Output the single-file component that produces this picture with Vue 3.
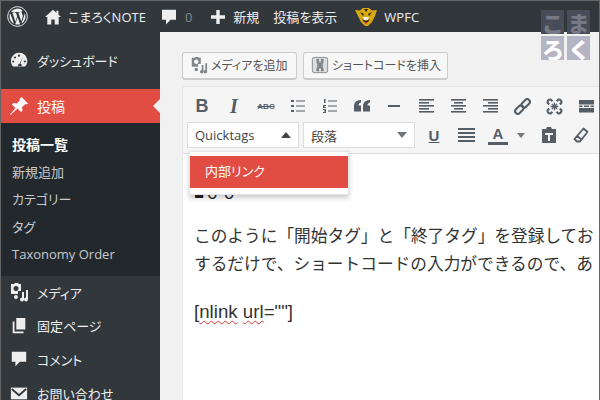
<script setup>
const subItems = [
  { label: '投稿一覧', current: true },
  { label: '新規追加' },
  { label: 'カテゴリー' },
  { label: 'タグ' },
  { label: 'Taxonomy Order' },
]
const alignRows = { left: [15, 10, 15, 10, 15], center: [15, 9, 15, 9, 15], right: [15, 10, 15, 10, 15] }
</script>

<template>
  <div class="screen">
    <header class="adminbar">
      <svg class="wp" viewBox="0 0 20 20" width="21" height="21">
        <circle cx="10" cy="10" r="9.4" fill="none" stroke="#eee" stroke-width=".9" />
        <path fill="#eee" d="M2.4 10c0 3 1.800 5.600 4.300 6.900L3.100 6.900A7.600 7.600 0 0 0 2.400 10zm12.700-.4c0-.9-.3-1.600-.6-2.100-.4-.6-.7-1.100-.7-1.700 0-.7.5-1.300 1.200-1.300h.1A7.600 7.600 0 0 0 3.600 5.900h.5c.8 0 2-.1 2-.1.4 0 .5.600 0 .6 0 0-.4.100-.9.100l2.800 8.400 1.700-5.100-1.200-3.300c-.4 0-.8-.1-.8-.1-.4 0-.4-.6 0-.6 0 0 1.300.1 2 .1.800 0 2-.1 2-.1.400 0 .5.600 0 .6 0 0-.4.100-.9.100l2.800 8.300.8-2.600c.3-1 .6-1.800.6-2.600zM10.100 10.700l-2.300 6.700a7.700 7.700 0 0 0 4.700-.1l-.1-.1zm6.500-4.300.1.800c0 .8-.1 1.600-.6 2.800l-2.300 6.700a7.600 7.600 0 0 0 2.800-10.300z" />
      </svg>
      <svg class="home" viewBox="0 0 16 16" width="16" height="16">
        <path fill="#eee" d="M8 .8 0 8h2.300v7.500h4V10.500h3.400v5h4V8H16l-2.600-2.400V1.700h-2v2.100z" />
      </svg>
      <span class="bar-site">こまろくNOTE</span>
      <svg class="bubble" viewBox="0 0 16 16" width="16" height="16">
        <path fill="#eee" d="M1 .8h14v10H9.500L5 15.500v-4.700H1z" />
      </svg>
      <span class="bar-count">0</span>
      <svg class="plus" viewBox="0 0 14 14" width="14" height="14">
        <path fill="#eee" d="M5.300 0h3.400v5.300H14v3.400H8.700V14H5.300V8.700H0V5.300h5.300z" />
      </svg>
      <span class="bar-new">新規</span>
      <span class="bar-view">投稿を表示</span>
      <svg class="tiger" viewBox="0 0 22 18" width="22" height="18">
        <path fill="#d8a913" d="M0 2l5 .5L8 0h6l3 2.500 5-.5-2 6-3 6-4 4h-3l-4-4-3-6z" />
        <path fill="#2b2410" d="M5 4l4 2-1 2zM17 4l-4 2 1 2zM9 1h4l-2 3zM7 11l4 2 4-2-2 3h-4z" />
        <path fill="#f4efe0" d="M8 9h6l-1 3H9z" />
        <path fill="#c42a1c" d="M9.500 14h3l-1.500 2.500z" />
      </svg>
      <span class="bar-wpfc">WPFC</span>
    </header>

    <div class="body">
      <aside class="sidebar">
        <a class="menu-item first">
          <svg viewBox="0 0 20 20" width="18" height="18">
            <path fill="#eee" fill-rule="evenodd" d="M10 2a9 9 0 0 0-9 9c0 2.400.9 4.700 2.400 6.300h13.200A9 9 0 0 0 10 2zM10 4a1.200 1.200 0 1 1 0 2.400A1.200 1.200 0 0 1 10 4zM5.500 6a1.200 1.200 0 1 1 0 2.400 1.200 1.200 0 0 1 0-2.400zM3.500 10.500a1.200 1.200 0 1 1 0 2.400 1.200 1.200 0 0 1 0-2.400zM16.500 10.500a1.200 1.200 0 1 1 0 2.400 1.200 1.200 0 0 1 0-2.400zM14.500 6.500l-3 7.500a2 2 0 1 1-2.500 1.500c.2-.6.800-1.200 1.500-1.300z" />
          </svg>
          <span>ダッシュボード</span>
        </a>
        <a class="menu-item active">
          <svg viewBox="0 0 20 20" width="20" height="20">
            <path fill="#fff" d="M12.500 1l6.500 6.500-1.500 1-1-.5-3.500 3 .5 3.500-1.500 1.500-3.500-3.500L1.500 19 1 18.500l5.500-6.500L3 8.500 4.500 7l3.500.5 3-3.500-.5-1z" />
          </svg>
          <span>投稿</span>
          <i class="caret"></i>
        </a>
        <ul class="submenu">
          <li v-for="item in subItems" :key="item.label" :class="{ current: item.current }">{{ item.label }}</li>
        </ul>
        <a class="menu-item">
          <svg viewBox="0 0 20 20" width="20" height="20">
            <path fill="#eee" fill-rule="evenodd" d="M2 2h3l1-1h3l1 1h2v7H9v3H2zM7 4a2.500 2.500 0 1 0 0 5 2.500 2.500 0 0 0 0-5z" />
            <path fill="#eee" d="M17 8h2v9.500a2 2 0 1 1-2-2zM13 10h2v7.500a2 2 0 1 1-2-2zM7 13a2 2 0 1 1-.1 4 2 2 0 0 1 .1-4z" />
          </svg>
          <span>メディア</span>
        </a>
        <a class="menu-item">
          <svg viewBox="0 0 20 20" width="18" height="18">
            <path fill="#eee" d="M7 1h10v13H7zM3 5h2v11h10v2H3z" />
          </svg>
          <span>固定ページ</span>
        </a>
        <a class="menu-item">
          <svg viewBox="0 0 20 20" width="18" height="18">
            <path fill="#eee" d="M2 2h16v11h-7l-5 5v-5H2z" />
          </svg>
          <span>コメント</span>
        </a>
        <a class="menu-item">
          <svg viewBox="0 0 20 20" width="18" height="18">
            <path fill="#eee" d="M1 4h18v13H1z" />
            <path fill="none" stroke="#32373c" stroke-width="2" d="M2 5.500l8 7 8-7" />
          </svg>
          <span>お問い合わせ</span>
        </a>
      </aside>

      <main class="content">
        <div class="media-buttons">
          <button class="wp-btn media">
            <svg viewBox="0 0 20 20" width="18" height="18">
              <path fill="#82878c" fill-rule="evenodd" d="M2 2h3l1-1h3l1 1h2v7H9v3H2zM7 4a2.500 2.500 0 1 0 0 5 2.500 2.500 0 0 0 0-5z" />
              <path fill="#82878c" d="M17 8h2v9.500a2 2 0 1 1-2-2zM13 10h2v7.500a2 2 0 1 1-2-2zM7 13a2 2 0 1 1-.1 4 2 2 0 0 1 .1-4z" />
            </svg>
            メディアを追加
          </button>
          <button class="wp-btn code">
            <svg viewBox="0 0 20 20" width="18" height="18">
              <rect x="1.500" y="1.500" width="17" height="17" rx="2" fill="#ddd" stroke="#82878c" />
              <path fill="#82878c" d="M6 3h3v4h2V3h3v4l-1 2v3l1 2v3h-3v-3H9v3H6v-3l1-2V9L6 7z" />
            </svg>
            ショートコードを挿入
          </button>
        </div>

        <section class="editor">
          <div class="toolbar">
            <div class="tool-row">
              <span class="slot ti b">B</span>
              <span class="slot ti i">I</span>
              <span class="slot ti abc">ABC</span>
              <span class="slot"><svg viewBox="0 0 14 14" width="14" height="14"><path fill="#555d66" d="M0 1h3v2H0zM0 6h3v2H0zM0 11h3v2H0zM5 1.500h9v1H5zM5 6.500h9v1H5zM5 11.500h9v1H5z" /></svg></span>
              <span class="slot"><svg viewBox="0 0 14 14" width="14" height="14"><path fill="#555d66" d="M1 0h1.500v4H1zM0 6h3v1H1.500v1H3v1H0v-1zM0 10h3v4H0v-1h2v-.5H1v-1h1V11H0zM5 1.500h9v1H5zM5 6.500h9v1H5zM5 11.500h9v1H5z" /></svg></span>
              <span class="slot"><svg viewBox="0 0 16 12" width="16" height="12"><path fill="#555d66" d="M7 0v2.500C5 3 4.500 4 4.500 5.500H7V11.500H0V6C0 2.500 2.500.3 7 0zM16 0v2.500C14 3 13.500 4 13.500 5.500H16v6H9V6c0-3.500 2.500-5.700 7-6z" /></svg></span>
              <span class="slot"><svg viewBox="0 0 14 14" width="14" height="14"><path fill="#555d66" d="M1 6h12v2H1z" /></svg></span>
              <span v-for="(w, k) in alignRows" :key="k" class="slot">
                <svg viewBox="0 0 15 14" width="15" height="14">
                  <rect v-for="(v, n) in w" :key="n"
                    :x="k === 'left' ? 0 : k === 'right' ? 15 - v : 7.500 - v / 2" :y="n * 3" :width="v" height="1.600" fill="#555d66" />
                </svg>
              </span>
              <span class="slot"><svg viewBox="0 0 16 16" width="17" height="17"><g fill="none" stroke="#555d66" stroke-width="2"><rect x="-4.500" y="-2.500" width="9" height="5" rx="2.500" transform="translate(5 11) rotate(-45)" /><rect x="-4.500" y="-2.500" width="9" height="5" rx="2.500" transform="translate(11 5) rotate(-45)" /></g></svg></span>
              <span class="slot"><svg viewBox="0 0 16 16" width="17" height="17"><g fill="none" stroke="#555d66" stroke-width="2"><path d="M6 3 4.500 1.500a2.500 2.500 0 0 0-3 3L3 6M13 10l1.500 1.500a2.500 2.500 0 0 1-3 3L10 13M10 3l1.500-1.500a2.500 2.500 0 0 1 3 3L13 6M6 13l-1.500 1.500a2.500 2.500 0 0 1-3-3L3 10" /><path stroke-width="1.200" d="M5.500 5.500l5 5M10.500 5.500l-5 5M8 4.500v7M4.500 8h7" /></g></svg></span>
              <span class="slot"><svg viewBox="0 0 15 13" width="15" height="13"><path fill="#555d66" d="M0 0h15v4.500H0zM0 5.500h3.500v1.500H0zM5 5.500h5v1.500H5zM11.500 5.500H15v1.500h-3.500zM0 8h15v4.500H0z" /></svg></span>
            </div>
            <div class="tool-row second">
              <div class="select qt">Quicktags<i class="up"></i></div>
              <div class="select fmt">段落<i class="down"></i></div>
              <span class="ti u">U</span>
              <svg class="just" viewBox="0 0 17 14" width="17" height="14"><path fill="#555d66" d="M0 0h17v2H0zM0 4h17v2H0zM0 8h17v2H0zM0 12h17v2H0z" /></svg>
              <span class="color-a">A<i></i></span>
              <i class="down small"></i>
              <svg class="paste" viewBox="0 0 16 16" width="16" height="16"><path fill="#555d66" d="M1 2h4l1-2h4l1 2h4v14H1zM4 6v2h3v6h2V8h3V6z" /></svg>
              <svg class="eraser" viewBox="0 0 16 16" width="16" height="16"><path fill="none" stroke="#555d66" stroke-width="1.800" stroke-linejoin="round" d="M10.500 1.500l4 3.500-7.500 9.500H4L1.500 12zM3.500 8.500l5 4" /></svg>
            </div>
          </div>

          <div class="edit-area">
            <p class="hidden-line">■００</p>
            <p>このように「開始タグ」と「終了タグ」を登録してお</p>
            <p>するだけで、ショートコードの入力ができるので、あ</p>
            <p class="shortcode">[<span class="typo">nlink</span> <span class="typo">url</span>=""]</p>
          </div>
        </section>
      </main>
    </div>

    <div class="qt-menu">
      <div class="qt-option">内部リンク</div>
    </div>

    <div class="stamp">
      <span>こ</span><span>ま</span><span>ろ</span><span>く</span>
    </div>
  </div>
</template>

<style>
html, body { margin: 0; padding: 0; }
</style>

<style scoped>
* { box-sizing: border-box; }
.screen {
  position: relative;
  width: 600px;
  height: 400px;
  overflow: hidden;
  display: flex;
  flex-direction: column;
  border: 1px solid #666;
  border-bottom: 0;
  background: #f1f1f1;
  font-family: "Open Sans", "Noto Sans CJK JP", sans-serif;
  font-feature-settings: "palt";
  font-size: 13px;
  color: #444;
}
.adminbar {
  height: 31px;
  flex: none;
  display: flex;
  align-items: center;
  background: #32373c;
  color: #eee;
  font-size: 13px;
  padding-left: 6px;
}
.home { margin-left: 17px; }
.bar-site { margin-left: 7px; }
.bubble { margin-left: 15px; }
.bar-count { margin-left: 8px; color: #82878c; }
.plus { margin-left: 19px; }
.bar-new { margin-left: 8px; }
.bar-view { margin-left: 14px; }
.tiger { margin-left: 18px; }
.bar-wpfc { margin-left: 7px; }

.body { flex: 1; display: flex; min-height: 0; }
.sidebar {
  width: 159px;
  flex: none;
  background: #32373c;
  padding-top: 11px;
}
.menu-item {
  display: flex;
  align-items: center;
  height: 33.600px;
  gap: 8px;
  padding-left: 8px;
  color: #eee;
  font-size: 13px;
  position: relative;
}
.menu-item svg { flex: none; width: 20px; }
.menu-item.first { height: 34px; margin-bottom: 12px; }
.menu-item.active { height: 34px; background: #e14d43; color: #fff; font-size: 14px; }
.caret {
  position: absolute;
  right: 0;
  top: 10px;
  border: 7px solid transparent;
  border-right-color: #f1f1f1;
  border-left-width: 0;
}
.submenu {
  list-style: none;
  margin: 0;
  padding: 8px 0 7px;
  background: #23282d;
  color: #c8cacc;
  font-size: 13px;
}
.submenu li { height: 27.500px; line-height: 27px; padding-left: 11px; }
.submenu li.current { color: #fff; font-weight: 700; font-size: 14px; }

.content { flex: 1; padding: 20px 0 0 22px; min-width: 0; }
.media-buttons { display: flex; gap: 6px; height: 28px; margin-bottom: 6px; }
.wp-btn {
  display: flex;
  align-items: center;
  gap: 3px;
  height: 28px;
  padding: 0 0 1px 7px;
  border: 1px solid #ccc;
  border-bottom-width: 2px;
  border-radius: 3px;
  background: #f7f7f7;
  color: #555;
  font-family: inherit;
  font-feature-settings: inherit;
  font-size: 12px;
  white-space: nowrap;
}
.wp-btn.media { width: 115px; }
.wp-btn.code { width: 145px; }
.editor {
  width: 450px;
  border: 1px solid #e5e5e5;
  border-right: 0;
  background: #fff;
  height: 400px;
}
.toolbar {
  height: 67px;
  background: #f5f5f5;
  border-bottom: 1px solid #ddd;
  padding-top: 4px;
}
.tool-row {
  display: flex;
  align-items: center;
  height: 30px;
  padding-left: 3px;
  color: #555d66;
  white-space: nowrap;
  overflow: hidden;
}
.tool-row.second { padding-left: 4px; height: 28px; }
.slot { flex: none; width: 32px; display: flex; justify-content: center; align-items: center; }
.ti { font-family: "Liberation Sans", sans-serif; font-weight: 700; font-size: 18px; }
.ti.i { font-family: "Liberation Serif", serif; font-style: italic; font-size: 20px; }
.ti.abc { font-size: 8px; text-decoration: line-through; }
.select {
  display: flex;
  align-items: center;
  justify-content: space-between;
  height: 26px;
  border: 1px solid #ddd;
  background: #fff;
  flex: none;
  padding: 0 7px;
  color: #444;
  font-size: 13px;
}
.qt { width: 112px; margin-right: 4px; }
.fmt { width: 112px; margin-right: 12px; }
.up, .down { display: block; width: 0; height: 0; border: 5px solid transparent; }
.up { border-top-width: 0; border-bottom: 6px solid #444; }
.down { border-bottom-width: 0; border-top: 6px solid #72777c; }
.ti.u { flex: none; width: 14px; text-align: center; text-decoration: underline; font-size: 15px; margin-right: 17px; }
.just { flex: none; margin-right: 13px; }
.color-a {
  flex: none;
  width: 20px;
  text-align: center;
  font-family: "Liberation Sans", sans-serif;
  font-weight: 700;
  font-size: 15px;
  line-height: 16px;
  margin-right: 9px;
}
.color-a i { display: block; height: 3px; background: #555d66; }
.down.small { border-width: 5px 4px 0; margin-right: 16px; flex: none; }
.paste { flex: none; margin-right: 16px; }
.eraser { flex: none; }
.edit-area {
  padding: 0 11px;
  font-family: "Liberation Sans", "Noto Sans CJK JP", sans-serif;
  font-feature-settings: normal;
  font-size: 16.700px;
  color: #333;
  white-space: nowrap;
  overflow: hidden;
}
.edit-area p { margin: 0; line-height: 28px; }
.edit-area .hidden-line { height: 69px; padding-top: 26px; color: #222; }
.edit-area .shortcode { margin-top: 19px; font-size: 18.700px; }
.typo {
  text-decoration: underline wavy #d33;
  text-decoration-thickness: 1px;
  text-underline-offset: 2px;
}
.qt-menu {
  position: absolute;
  left: 188px;
  top: 150px;
  width: 160px;
  height: 44px;
  padding-top: 4px;
  background: #fff;
  border: 1px solid #e5e5e5;
  box-shadow: 0 3px 5px rgba(0, 0, 0, .2);
}
.qt-option {
  height: 32px;
  line-height: 31px;
  background: #e14d43;
  color: #fff;
  padding-left: 15px;
  font-size: 13px;
}
.stamp {
  position: absolute;
  left: 540px;
  top: 9px;
  display: grid;
  grid-template-columns: 23px 23px;
  grid-auto-rows: 24px;
  gap: 2px 3px;
}
.stamp span {
  height: 24px;
  overflow: hidden;
  font-family: "Noto Sans CJK JP", sans-serif;
  font-weight: 900;
  font-size: 22px;
  line-height: 24px;
  text-align: center;
}
.stamp span:nth-child(n+3) { background: #b4b4c2; color: #fff; }
.stamp span:nth-child(-n+2) { background: #484c58; color: #777a86; }
</style>
